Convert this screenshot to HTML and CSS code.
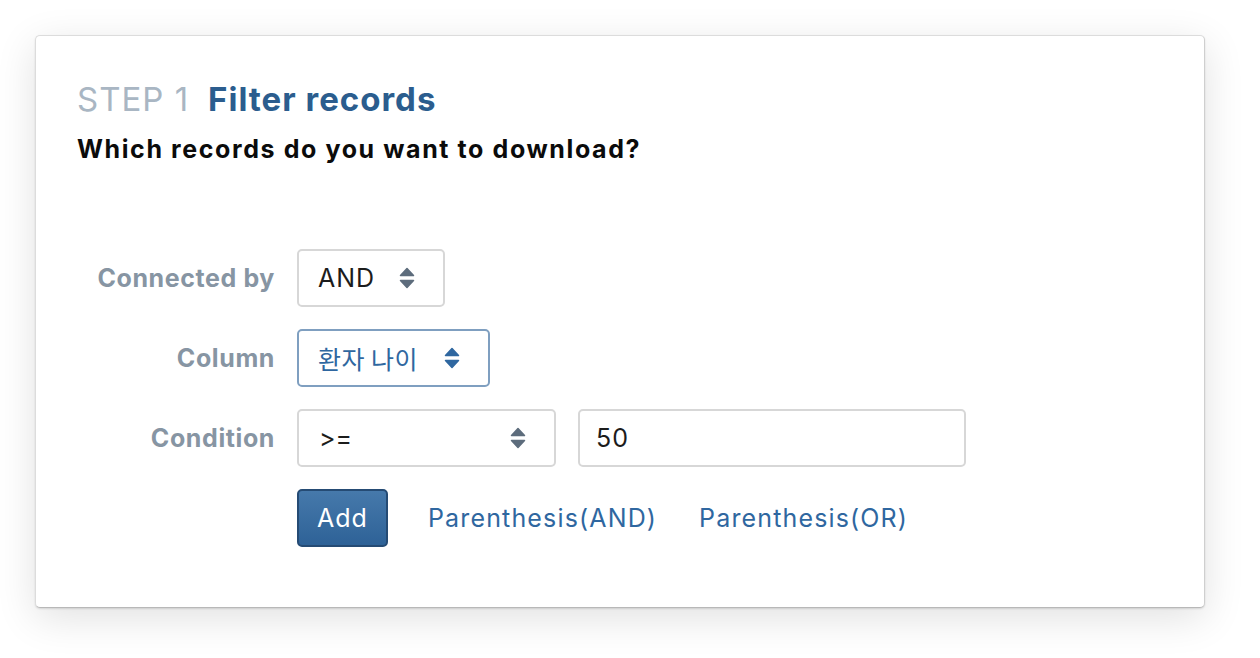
FILE: index.html
```html
<!DOCTYPE html>
<html lang="en">
<head>
<meta charset="utf-8">
<link rel="stylesheet" href="styles.css">
</head>
<body>
<div class="card">
  <h1 class="title"><span class="step">STEP 1</span><span class="name">Filter records</span></h1>
  <p class="subtitle">Which records do you want to download?</p>
  <div class="form">
    <div class="label">Connected by</div>
    <div class="controls">
      <div class="select select-and"><span>AND</span>
        <svg class="arrows" width="16" height="22" viewBox="0 0 16 22"><path d="M8 1.5 L14.5 8.5 L1.5 8.5 Z M1.5 13.5 L14.5 13.5 L8 20.5 Z" fill="#5d6c7c" stroke="#5d6c7c" stroke-width="1.5" stroke-linejoin="round"/></svg>
      </div>
    </div>
    <div class="label">Column</div>
    <div class="controls">
      <div class="select select-col active"><span class="ko">환자 나이</span>
        <svg class="arrows" width="16" height="22" viewBox="0 0 16 22"><path d="M8 1.5 L14.5 8.5 L1.5 8.5 Z M1.5 13.5 L14.5 13.5 L8 20.5 Z" fill="#2f67a0" stroke="#2f67a0" stroke-width="1.5" stroke-linejoin="round"/></svg>
      </div>
    </div>
    <div class="label">Condition</div>
    <div class="controls">
      <div class="select select-cond"><span class="op">&gt;=</span>
        <svg class="arrows" width="16" height="22" viewBox="0 0 16 22"><path d="M8 1.5 L14.5 8.5 L1.5 8.5 Z M1.5 13.5 L14.5 13.5 L8 20.5 Z" fill="#5d6c7c" stroke="#5d6c7c" stroke-width="1.5" stroke-linejoin="round"/></svg>
      </div>
      <div class="input">50</div>
    </div>
    <div class="label"></div>
    <div class="controls actions">
      <button class="btn">Add</button>
      <a class="link">Parenthesis(AND)</a>
      <a class="link">Parenthesis(OR)</a>
    </div>
  </div>
</div>
</body>
</html>
```

FILE: styles.css
```css
html, body {
  margin: 0;
  padding: 0;
  background: #ffffff;
}
body {
  font-family: Inter, "Liberation Sans", "Noto Sans CJK KR", sans-serif;
  padding: 35px 0 50px 35px;
}
.card {
  box-sizing: border-box;
  width: 1170px;
  height: 573px;
  background: #fff;
  border: 1px solid #dcdcdc;
  border-bottom-color: #b8b8b8;
  border-right-color: #cfcfcf;
  border-radius: 5px;
  box-shadow: 0 1px 2px rgba(0,0,0,0.12), 0 10px 40px rgba(0,0,0,0.12);
  padding: 43px 41px 0 41px;
}
.title {
  margin: 0;
  font-size: 33px;
  line-height: 40px;
  font-weight: 400;
  letter-spacing: 1px;
  display: flex;
  gap: 19px;
}
.step {
  color: #a9b6c3;
}
.name {
  color: #2b5d8e;
  font-weight: 700;
}
.subtitle {
  margin: 15px 0 0 0;
  font-size: 25px;
  line-height: 30px;
  font-weight: 700;
  letter-spacing: 1.6px;
  color: #0b0b0b;
}
.form {
  margin-top: 85px;
  display: grid;
  grid-template-columns: 198px auto;
  column-gap: 22px;
  row-gap: 22px;
  align-items: center;
}
.label {
  text-align: right;
  font-size: 25px;
  font-weight: 700;
  letter-spacing: 0.6px;
  color: #8795a3;
}
.controls {
  display: flex;
  align-items: center;
  gap: 22px;
  height: 58px;
}
.select {
  box-sizing: border-box;
  height: 58px;
  border: 2px solid #d7d7d7;
  border-radius: 5px;
  display: flex;
  align-items: center;
  justify-content: space-between;
  padding: 0 28px 0 19px;
  font-size: 25px;
  letter-spacing: 1px;
  color: #1c1c1c;
}
.select .op {
  letter-spacing: 0;
  padding-left: 1px;
}
.select-and { width: 148px; }
.select-col { width: 193px; }
.select-cond { width: 259px; }
.select.active {
  border-color: #7f9fc0;
  color: #2f67a0;
}
.ko {
  font-family: "Noto Sans CJK KR", sans-serif;
  font-size: 25px;
  letter-spacing: 0.5px;
}
.input {
  box-sizing: border-box;
  width: 388px;
  height: 58px;
  border: 2px solid #d7d7d7;
  border-radius: 5px;
  display: flex;
  align-items: center;
  padding-left: 16px;
  font-size: 25px;
  letter-spacing: 1px;
  color: #1c1c1c;
}
.actions { gap: 0; }
.btn {
  box-sizing: border-box;
  width: 91px;
  height: 58px;
  border: 2px solid #254b74;
  border-radius: 5px;
  background: linear-gradient(#4679ab, #2e6297);
  color: #fff;
  font-family: inherit;
  font-size: 25px;
  letter-spacing: 1px;
  padding: 0;
  margin-right: 40px;
}
.link {
  color: #2f67a0;
  font-size: 25px;
  letter-spacing: 1.15px;
  margin-right: 42px;
}
```
